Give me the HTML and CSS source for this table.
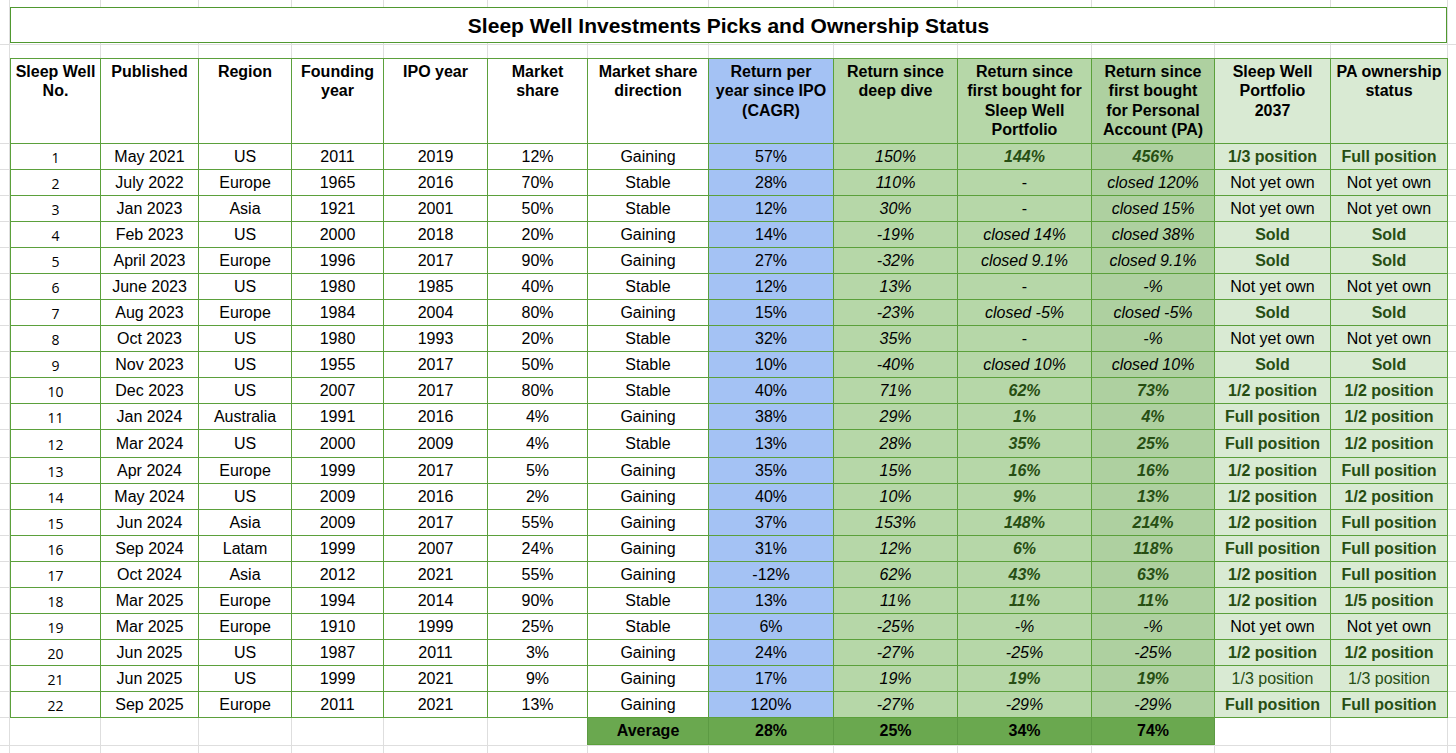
FILE: index.html
```html
<!DOCTYPE html>
<html lang="en">
<head>
<meta charset="utf-8">
<title>Sleep Well Investments Picks and Ownership Status</title>
<link rel="stylesheet" href="styles.css">
</head>
<body>
<div class="sheet">
  <div class="title">Sleep Well Investments Picks and Ownership Status</div>
  <table class="picks">
    <colgroup>
      <col class="w1"><col class="w2"><col class="w3"><col class="w4"><col class="w5"><col class="w6"><col class="w7">
      <col class="w8"><col class="w9"><col class="w10"><col class="w11"><col class="w12"><col class="w13">
    </colgroup>
    <thead>
      <tr class="head">
        <th>Sleep Well<br>No.</th>
        <th>Published</th>
        <th>Region</th>
        <th>Founding<br>year</th>
        <th>IPO year</th>
        <th>Market<br>share</th>
        <th>Market share<br>direction</th>
        <th class="blue">Return per<br>year since IPO<br>(CAGR)</th>
        <th class="g">Return since<br>deep dive</th>
        <th class="g">Return since<br>first bought for<br>Sleep Well<br>Portfolio</th>
        <th class="g2">Return since<br>first bought<br>for Personal<br>Account (PA)</th>
        <th class="lt">Sleep Well<br>Portfolio<br>2037</th>
        <th class="lt">PA ownership<br>status</th>
      </tr>
    </thead>
    <tbody>
      <tr><td class="no">1</td><td>May 2021</td><td>US</td><td>2011</td><td>2019</td><td>12%</td><td>Gaining</td><td class="blue">57%</td><td class="g it">150%</td><td class="g it gb">144%</td><td class="g2 it gb">456%</td><td class="lt gb">1/3 position</td><td class="lt gb">Full position</td></tr>
      <tr><td class="no">2</td><td>July 2022</td><td>Europe</td><td>1965</td><td>2016</td><td>70%</td><td>Stable</td><td class="blue">28%</td><td class="g it">110%</td><td class="g">-</td><td class="g2 it">closed 120%</td><td class="lt">Not yet own</td><td class="lt">Not yet own</td></tr>
      <tr><td class="no">3</td><td>Jan 2023</td><td>Asia</td><td>1921</td><td>2001</td><td>50%</td><td>Stable</td><td class="blue">12%</td><td class="g it">30%</td><td class="g">-</td><td class="g2 it">closed 15%</td><td class="lt">Not yet own</td><td class="lt">Not yet own</td></tr>
      <tr><td class="no">4</td><td>Feb 2023</td><td>US</td><td>2000</td><td>2018</td><td>20%</td><td>Gaining</td><td class="blue">14%</td><td class="g it">-19%</td><td class="g it">closed 14%</td><td class="g2 it">closed 38%</td><td class="lt gb">Sold</td><td class="lt gb">Sold</td></tr>
      <tr><td class="no">5</td><td>April 2023</td><td>Europe</td><td>1996</td><td>2017</td><td>90%</td><td>Gaining</td><td class="blue">27%</td><td class="g it">-32%</td><td class="g it">closed 9.1%</td><td class="g2 it">closed 9.1%</td><td class="lt gb">Sold</td><td class="lt gb">Sold</td></tr>
      <tr><td class="no">6</td><td>June 2023</td><td>US</td><td>1980</td><td>1985</td><td>40%</td><td>Stable</td><td class="blue">12%</td><td class="g it">13%</td><td class="g">-</td><td class="g2 it">-%</td><td class="lt">Not yet own</td><td class="lt">Not yet own</td></tr>
      <tr><td class="no">7</td><td>Aug 2023</td><td>Europe</td><td>1984</td><td>2004</td><td>80%</td><td>Gaining</td><td class="blue">15%</td><td class="g it">-23%</td><td class="g it">closed -5%</td><td class="g2 it">closed -5%</td><td class="lt gb">Sold</td><td class="lt gb">Sold</td></tr>
      <tr><td class="no">8</td><td>Oct 2023</td><td>US</td><td>1980</td><td>1993</td><td>20%</td><td>Stable</td><td class="blue">32%</td><td class="g it">35%</td><td class="g">-</td><td class="g2 it">-%</td><td class="lt">Not yet own</td><td class="lt">Not yet own</td></tr>
      <tr><td class="no">9</td><td>Nov 2023</td><td>US</td><td>1955</td><td>2017</td><td>50%</td><td>Stable</td><td class="blue">10%</td><td class="g it">-40%</td><td class="g it">closed 10%</td><td class="g2 it">closed 10%</td><td class="lt gb">Sold</td><td class="lt gb">Sold</td></tr>
      <tr><td class="no">10</td><td>Dec 2023</td><td>US</td><td>2007</td><td>2017</td><td>80%</td><td>Stable</td><td class="blue">40%</td><td class="g it">71%</td><td class="g it gb">62%</td><td class="g2 it gb">73%</td><td class="lt gb">1/2 position</td><td class="lt gb">1/2 position</td></tr>
      <tr><td class="no">11</td><td>Jan 2024</td><td>Australia</td><td>1991</td><td>2016</td><td>4%</td><td>Gaining</td><td class="blue">38%</td><td class="g it">29%</td><td class="g it gb">1%</td><td class="g2 it gb">4%</td><td class="lt gb">Full position</td><td class="lt gb">1/2 position</td></tr>
      <tr class="tall"><td class="no">12</td><td>Mar 2024</td><td>US</td><td>2000</td><td>2009</td><td>4%</td><td>Stable</td><td class="blue">13%</td><td class="g it">28%</td><td class="g it gb">35%</td><td class="g2 it gb">25%</td><td class="lt gb">Full position</td><td class="lt gb">1/2 position</td></tr>
      <tr><td class="no">13</td><td>Apr 2024</td><td>Europe</td><td>1999</td><td>2017</td><td>5%</td><td>Gaining</td><td class="blue">35%</td><td class="g it">15%</td><td class="g it gb">16%</td><td class="g2 it gb">16%</td><td class="lt gb">1/2 position</td><td class="lt gb">Full position</td></tr>
      <tr><td class="no">14</td><td>May 2024</td><td>US</td><td>2009</td><td>2016</td><td>2%</td><td>Gaining</td><td class="blue">40%</td><td class="g it">10%</td><td class="g it gb">9%</td><td class="g2 it gb">13%</td><td class="lt gb">1/2 position</td><td class="lt gb">1/2 position</td></tr>
      <tr><td class="no">15</td><td>Jun 2024</td><td>Asia</td><td>2009</td><td>2017</td><td>55%</td><td>Gaining</td><td class="blue">37%</td><td class="g it">153%</td><td class="g it gb">148%</td><td class="g2 it gb">214%</td><td class="lt gb">1/2 position</td><td class="lt gb">Full position</td></tr>
      <tr><td class="no">16</td><td>Sep 2024</td><td>Latam</td><td>1999</td><td>2007</td><td>24%</td><td>Gaining</td><td class="blue">31%</td><td class="g it">12%</td><td class="g it gb">6%</td><td class="g2 it gb">118%</td><td class="lt gb">Full position</td><td class="lt gb">Full position</td></tr>
      <tr><td class="no">17</td><td>Oct 2024</td><td>Asia</td><td>2012</td><td>2021</td><td>55%</td><td>Gaining</td><td class="blue">-12%</td><td class="g it">62%</td><td class="g it gb">43%</td><td class="g2 it gb">63%</td><td class="lt gb">1/2 position</td><td class="lt gb">Full position</td></tr>
      <tr><td class="no">18</td><td>Mar 2025</td><td>Europe</td><td>1994</td><td>2014</td><td>90%</td><td>Stable</td><td class="blue">13%</td><td class="g it">11%</td><td class="g it gb">11%</td><td class="g2 it gb">11%</td><td class="lt gb">1/2 position</td><td class="lt gb">1/5 position</td></tr>
      <tr><td class="no">19</td><td>Mar 2025</td><td>Europe</td><td>1910</td><td>1999</td><td>25%</td><td>Stable</td><td class="blue">6%</td><td class="g it">-25%</td><td class="g it">-%</td><td class="g2 it">-%</td><td class="lt">Not yet own</td><td class="lt">Not yet own</td></tr>
      <tr><td class="no">20</td><td>Jun 2025</td><td>US</td><td>1987</td><td>2011</td><td>3%</td><td>Gaining</td><td class="blue">24%</td><td class="g it">-27%</td><td class="g it">-25%</td><td class="g2 it">-25%</td><td class="lt gb">1/2 position</td><td class="lt gb">1/2 position</td></tr>
      <tr><td class="no">21</td><td>Jun 2025</td><td>US</td><td>1999</td><td>2021</td><td>9%</td><td>Gaining</td><td class="blue">17%</td><td class="g it">19%</td><td class="g it gb">19%</td><td class="g2 it gb">19%</td><td class="lt dg">1/3 position</td><td class="lt dg">1/3 position</td></tr>
      <tr><td class="no">22</td><td>Sep 2025</td><td>Europe</td><td>2011</td><td>2021</td><td>13%</td><td>Gaining</td><td class="blue">120%</td><td class="g it">-27%</td><td class="g it">-29%</td><td class="g2 it">-29%</td><td class="lt gb">Full position</td><td class="lt gb">Full position</td></tr>
      <tr class="avg">
        <td class="empty"></td><td class="empty"></td><td class="empty"></td><td class="empty"></td><td class="empty"></td><td class="empty"></td>
        <td class="sum">Average</td><td class="sum">28%</td><td class="sum">25%</td><td class="sum">34%</td><td class="sum">74%</td>
        <td class="empty"></td><td class="empty"></td>
      </tr>
    </tbody>
  </table>
</div>
</body>
</html>
```
FILE: styles.css
```css
html, body {
  margin: 0;
  padding: 0;
  background: #fff;
}

.sheet {
  width: 1456px;
  height: 753px;
  overflow: hidden;
  box-sizing: border-box;
  padding: 7px 9px 0 10px;
  font-family: "Liberation Sans", Arial, sans-serif;
  color: #000;
  background:
    linear-gradient(#dedede, #dedede) 9px 0 / 1px 100% no-repeat,
    linear-gradient(#dedede, #dedede) 100px 0 / 1px 100% no-repeat,
    linear-gradient(#dedede, #dedede) 198px 0 / 1px 100% no-repeat,
    linear-gradient(#dedede, #dedede) 291px 0 / 1px 100% no-repeat,
    linear-gradient(#dedede, #dedede) 383px 0 / 1px 100% no-repeat,
    linear-gradient(#dedede, #dedede) 487px 0 / 1px 100% no-repeat,
    linear-gradient(#dedede, #dedede) 587px 0 / 1px 100% no-repeat,
    linear-gradient(#dedede, #dedede) 708px 0 / 1px 100% no-repeat,
    linear-gradient(#dedede, #dedede) 833px 0 / 1px 100% no-repeat,
    linear-gradient(#dedede, #dedede) 957px 0 / 1px 100% no-repeat,
    linear-gradient(#dedede, #dedede) 1091px 0 / 1px 100% no-repeat,
    linear-gradient(#dedede, #dedede) 1214px 0 / 1px 100% no-repeat,
    linear-gradient(#dedede, #dedede) 1330px 0 / 1px 100% no-repeat,
    linear-gradient(#dedede, #dedede) 1447px 0 / 1px 100% no-repeat,
    linear-gradient(#dedede, #dedede) 0 44px / 100% 1px no-repeat,
    linear-gradient(#dedede, #dedede) 0 745px / 100% 1px no-repeat,
    repeating-linear-gradient(#dedede 0 1px, transparent 1px 26px) 0 143px / 100% 288px no-repeat,
    repeating-linear-gradient(#dedede 0 1px, transparent 1px 26px) 0 457px / 100% 261px no-repeat,
    #fff;
}

.title {
  height: 36px;
  box-sizing: border-box;
  border: 1px solid #4f982f;
  background: #fff;
  display: flex;
  align-items: center;
  justify-content: center;
  font-weight: bold;
  font-size: 21px;
  padding-top: 1px;
}

.picks {
  margin-top: 15px;
  width: 1437px;
  table-layout: fixed;
  border-collapse: collapse;
  font-size: 16px;
}

.w1 { width: 90px; }
.w2 { width: 98px; }
.w3 { width: 93px; }
.w4 { width: 92px; }
.w5 { width: 104px; }
.w6 { width: 100px; }
.w7 { width: 121px; }
.w8 { width: 125px; }
.w9 { width: 124px; }
.w10 { width: 134px; }
.w11 { width: 123px; }
.w12 { width: 116px; }
.w13 { width: 117px; }

.picks th,
.picks td {
  border: 1px solid #5ba03b;
  background: #fff;
  text-align: center;
  white-space: nowrap;
  padding: 0 2px;
  overflow: hidden;
}

.picks th {
  vertical-align: top;
  font-weight: bold;
  line-height: 19.3px;
  padding-top: 3px;
}

.picks tr.head {
  height: 85px;
}

.picks tbody tr {
  height: 26px;
}

.picks tbody tr.tall {
  height: 28px;
}

.picks tbody tr.avg {
  height: 27px;
}

.picks td {
  vertical-align: middle;
  line-height: 18px;
}

.picks td.no {
  font-family: "Open Sans", "Noto Sans", sans-serif;
  font-size: 14px;
  padding-top: 3px;
}

.picks .blue { background: #a4c2f4; }
.picks .g { background: #b6d7a8; }
.picks .g2 { background: #aed0a0; }
.picks .lt { background: #d9ead3; }

.it { font-style: italic; }

.gb {
  font-weight: bold;
  color: #274e13;
}

.dg { color: #274e13; }

.picks td.empty {
  border: none;
  background: transparent;
}

.picks td.sum {
  background: #6aa84f;
  border-color: #5c9a43;
  border-bottom-color: #5ba03b;
  font-weight: bold;
  font-size: 16px;
}
```
